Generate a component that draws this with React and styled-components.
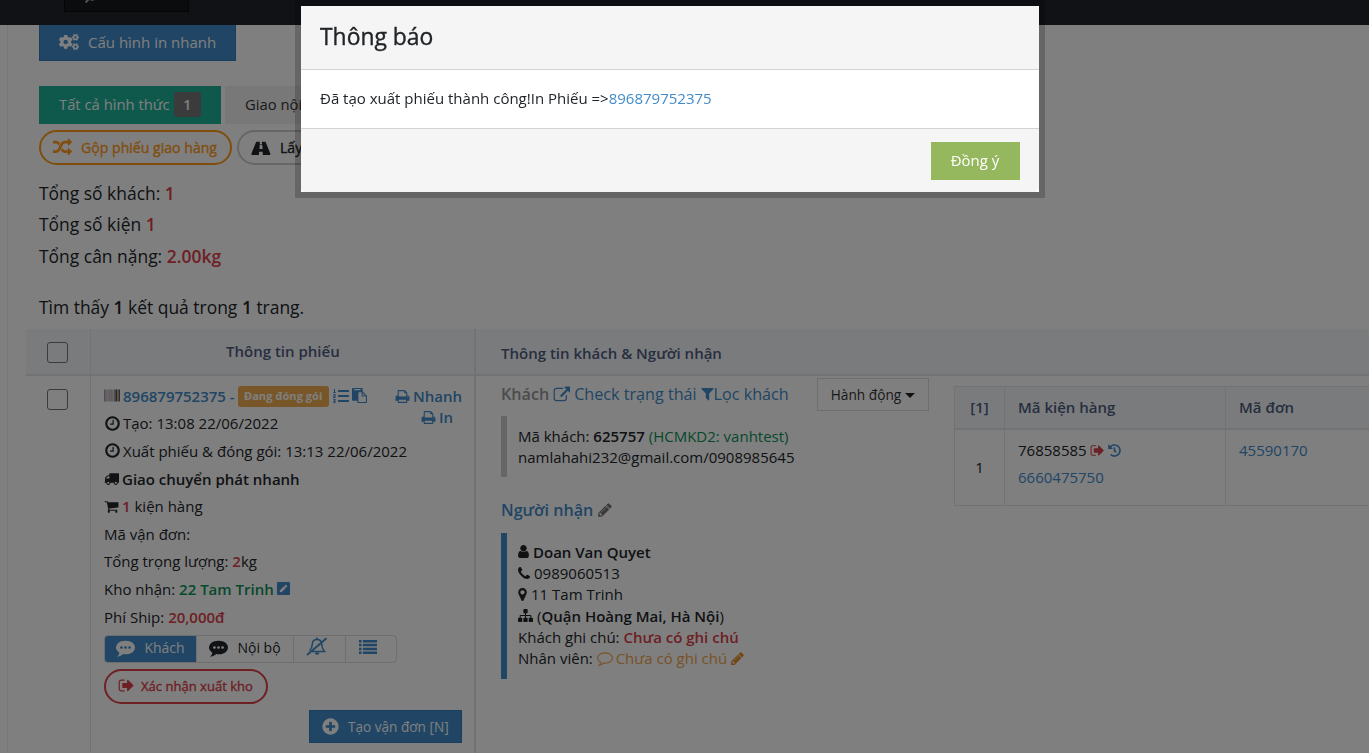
import React from 'react';
import styled, { createGlobalStyle, css } from 'styled-components';
import { FaCogs, FaListOl, FaPenSquare, FaHistory, FaSearch } from 'react-icons/fa';

const GlobalStyle = createGlobalStyle`
  *, *::before, *::after { box-sizing: border-box; }
  body {
    margin: 0;
    overflow: hidden;
    background: #fff;
    color: #212529;
    font-family: 'Open Sans', 'Noto Sans', sans-serif;
    font-size: 15px;
  }
  h2, p { margin: 0; font-weight: 400; }
  button { font-family: inherit; }
`;

const paths = {
  clock: 'M1024 544v448q0 14-9 23t-23 9h-320q-14 0-23-9t-9-23v-64q0-14 9-23t23-9h224v-352q0-14 9-23t23-9h64q14 0 23 9t9 23zm416 352q0-148-73-273t-198-198-273-73-273 73-198 198-73 273 73 273 198 198 273 73 273-73 198-198 73-273zm224 0q0 209-103 385.5t-279.5 279.5-385.5 103-385.5-103-279.5-279.5-103-385.5 103-385.5 279.5-279.5 385.5-103 385.5 103 279.5 279.5 103 385.5z',
  plus: 'M1344 960v-128q0-26-19-45t-45-19h-256v-256q0-26-19-45t-45-19h-128q-26 0-45 19t-19 45v256h-256q-26 0-45 19t-19 45v128q0 26 19 45t45 19h256v256q0 26 19 45t45 19h128q26 0 45-19t19-45v-256h256q26 0 45-19t19-45zm320-64q0 209-103 385.5t-279.5 279.5-385.5 103-385.5-103-279.5-279.5-103-385.5 103-385.5 279.5-279.5 385.5-103 385.5 103 279.5 279.5 103 385.5z',
  commenting: 'M640 896q0-53-37.5-90.5t-90.5-37.5-90.5 37.5-37.5 90.5 37.5 90.5 90.5 37.5 90.5-37.5 37.5-90.5zm384 0q0-53-37.5-90.5t-90.5-37.5-90.5 37.5-37.5 90.5 37.5 90.5 90.5 37.5 90.5-37.5 37.5-90.5zm384 0q0-53-37.5-90.5t-90.5-37.5-90.5 37.5-37.5 90.5 37.5 90.5 90.5 37.5 90.5-37.5 37.5-90.5zm384 0q0 174-120 321.5t-326 233-450 85.5q-110 0-211-18-173 173-435 229-52 10-86 13-12 1-22-6t-13-18q-4-15 20-37 5-5 23.5-21.5t25.5-23.5 23.5-25.5 24-31.5 20.5-37 20-48 14.5-57.5 12.5-72.5q-146-90-229.5-216.5t-83.5-269.5q0-174 120-321.5t326-233 450-85.5 450 85.5 326 233 120 321.5z',
  comment: 'M896 384q-204 0-381.5 69.5t-282 187.5-104.5 255q0 112 71.5 213.5t201.5 175.5l87 50-27 96q-24 91-70 172 152-63 275-171l43-38 57 6q69 8 130 8 204 0 381.5-69.5t282-187.5 104.5-255-104.5-255-282-187.5-381.5-69.5zm896 512q0 174-120 321.5t-326 233-450 85.5q-70 0-145-8-198 175-460 242-49 14-114 22h-5q-15 0-27-10.5t-16-27.5v-1q-3-4-.5-12t2-10 4.5-9.5l6-9 7-8.5 8-9q7-8 31-34.5t34.5-38 31-39.5 32.5-51 27-59 26-76q-157-89-247.5-220t-90.5-281q0-174 120-321.5t326-233 450-85.5 450 85.5 326 233 120 321.5z',
  print: 'M448 1536h896v-256h-896v256zm0-640h896v-384h-160q-40 0-68-28t-28-68v-160h-640v640zm1152 64q0-26-19-45t-45-19-45 19-19 45 19 45 45 19 45-19 19-45zm128 0v416q0 13-9.5 22.5t-22.5 9.5h-224v160q0 40-28 68t-68 28h-960q-40 0-68-28t-28-68v-160h-224q-13 0-22.5-9.5t-9.5-22.5v-416q0-79 56.5-135.5t135.5-56.5h64v-544q0-40 28-68t68-28h672q40 0 88 20t76 48l152 152q28 28 48 76t20 88v256h64q79 0 135.5 56.5t56.5 135.5z',
  signout: 'M704 1440q0 4 1 20t.5 26.5-3 23.5-10 19.5-20.5 6.5h-320q-119 0-203.5-84.5t-84.5-203.5v-704q0-119 84.5-203.5t203.5-84.5h320q13 0 22.5 9.5t9.5 22.5q0 4 1 20t.5 26.5-3 23.5-10 19.5-20.5 6.5h-320q-66 0-113 47t-47 113v704q0 66 47 113t113 47h312l11.5 1 11.5 3 8 5.5 7 9 2 13.5zm928-544q0 26-19 45l-544 544q-19 19-45 19t-45-19-19-45v-288h-448q-26 0-45-19t-19-45v-384q0-26 19-45t45-19h448v-288q0-26 19-45t45-19 45 19l544 544q19 19 19 45z',
  filter: 'M1595 295q17 41-14 70l-493 493v742q0 42-39 59-13 5-25 5-27 0-45-19l-256-256q-19-19-19-45v-486l-493-493q-31-29-14-70 17-39 59-39h1280q42 0 59 39z',
  external: 'M1472 992v320q0 119-84.5 203.5t-203.5 84.5h-832q-119 0-203.5-84.5t-84.5-203.5v-832q0-119 84.5-203.5t203.5-84.5h704q14 0 23 9t9 23v64q0 14-9 23t-23 9h-704q-66 0-113 47t-47 113v832q0 66 47 113t113 47h832q66 0 113-47t47-113v-320q0-14 9-23t23-9h64q14 0 23 9t9 23zm384-864v512q0 26-19 45t-45 19-45-19l-176-176-652 652q-10 10-23 10t-23-10l-114-114q-10-10-10-23t10-23l652-652-176-176q-19-19-19-45t19-45 45-19h512q26 0 45 19t19 45z',
  pencil: 'M491 1536l91-91-235-235-91 91v107h128v128h107zm523-928q0-22-22-22-10 0-17 7l-542 542q-7 7-7 17 0 22 22 22 10 0 17-7l542-542q7-7 7-17zm-54-192l416 416-832 832h-416v-416zm683 96q0 53-37 90l-166 166-416-416 166-165q36-38 90-38 53 0 91 38l235 234q37 39 37 91z',
  user: 'M1536 1399q0 109-62.5 187t-150.5 78h-854q-88 0-150.5-78t-62.5-187q0-85 8.5-160.5t31.5-152 58.5-131 94-89 134.5-34.5q131 128 313 128t313-128q76 0 134.5 34.5t94 89 58.5 131 31.5 152 8.5 160.5zm-256-887q0 159-112.5 271.5t-271.5 112.5-271.5-112.5-112.5-271.5 112.5-271.5 271.5-112.5 271.5 112.5 112.5 271.5z',
  phone: 'M1600 1240q0 27-10 70.5t-21 68.5q-21 50-122 106-94 51-186 51-27 0-53-3.5t-57.5-12.5-47-14.5-55.5-20.5-49-18q-98-35-175-83-127-79-264-216t-216-264q-48-77-83-175-3-9-18-49t-20.5-55.5-14.5-47-12.5-57.5-3.5-53q0-92 51-186 56-101 106-122 25-11 68.5-21t70.5-10q14 0 21 3 18 6 53 76 11 19 30 54t35 63.5 31 53.5q3 4 17.5 25t21.5 35.5 7 28.5q0 20-28.5 50t-62 55-62 53-28.5 46q0 9 5 22.5t8.5 20.5 14 24 11.5 19q76 137 174 235t235 174q2 1 19 11.5t24 14 20.5 8.5 22.5 5q18 0 46-28.5t53-62 55-62 50-28.5q14 0 28.5 7t35.5 21.5 25 17.5q25 15 53.5 31t63.5 35 54 30q70 35 76 53 3 7 3 21z',
  marker: 'M1152 640q0-106-75-181t-181-75-181 75-75 181 75 181 181 75 181-75 75-181zm256 0q0 109-33 179l-364 774q-16 33-47.5 52t-67.5 19-67.5-19-46.5-52l-365-774q-33-70-33-179 0-212 150-362t362-150 362 150 150 362z',
  sitemap: 'M1792 1248v320q0 40-28 68t-68 28h-320q-40 0-68-28t-28-68v-320q0-40 28-68t68-28h96v-192h-512v192h96q40 0 68 28t28 68v320q0 40-28 68t-68 28h-320q-40 0-68-28t-28-68v-320q0-40 28-68t68-28h96v-192h-512v192h96q40 0 68 28t28 68v320q0 40-28 68t-68 28h-320q-40 0-68-28t-28-68v-320q0-40 28-68t68-28h96v-192q0-52 38-90t90-38h512v-192h-96q-40 0-68-28t-28-68v-320q0-40 28-68t68-28h320q40 0 68 28t28 68v320q0 40-28 68t-68 28h-96v192h512q52 0 90 38t38 90v192h96q40 0 68 28t28 68z',
  cart: 'M704 1536q0 52-38 90t-90 38-90-38-38-90 38-90 90-38 90 38 38 90zm896 0q0 52-38 90t-90 38-90-38-38-90 38-90 90-38 90 38 38 90zm128-1088v512q0 24-16.5 42.5t-40.5 21.5l-1044 122q13 60 13 70 0 16-24 64h920q26 0 45 19t19 45-19 45-45 19h-1024q-26 0-45-19t-19-45q0-11 8-31.5t16-36 21.5-40 15.5-29.5l-177-823h-204q-26 0-45-19t-19-45 19-45 45-19h256q16 0 28.5 6.5t19.5 15.5 13 24.5 8 26 5.5 29.5 4.5 26h1201q26 0 45 19t19 45z',
  truck: 'M640 1408q0-52-38-90t-90-38-90 38-38 90 38 90 90 38 90-38 38-90zm-384-512h384v-256h-158q-13 0-22 9l-195 195q-9 9-9 22v30zm1280 512q0-52-38-90t-90-38-90 38-38 90 38 90 90 38 90-38 38-90zm256-1088v1024q0 15-4 26.5t-13.5 18.5-16.5 11.5-23.5 6-22.5 2-25.5 0-22.5-.5q0 106-75 181t-181 75-181-75-75-181h-384q0 106-75 181t-181 75-181-75-75-181h-64q-3 0-22.5.5t-25.5 0-22.5-2-23.5-6-16.5-11.5-13.5-18.5-4-26.5q0-26 19-45t45-19v-320q0-8-.5-35t0-38 2.5-34.5 6.5-37 14-30.5 22.5-30l198-198q19-19 50.5-32t58.5-13h160v-192q0-26 19-45t45-19h1024q26 0 45 19t19 45z',
  random: 'M666 481q-60 92-137 273-22-45-37-72.5t-40.5-63.5-51-56.5-63-35-81.5-14.5h-224q-14 0-23-9t-9-23v-192q0-14 9-23t23-9h224q250 0 410 225zm1126 799q0 14-9 23l-320 320q-9 9-23 9-13 0-22.5-9.5t-9.5-22.5v-192q-32 0-85 .5t-81 1-73-1-71-5-64-10.5-63-18.5-58-28.5-59-40-55-53.5-56-69.5q59-93 136-273 22 45 37 72.5t40.5 63.5 51 56.5 63 35 81.5 14.5h256v-192q0-14 9-23t23-9q12 0 24 10l319 319q9 9 9 23zm0-896q0 14-9 23l-320 320q-9 9-23 9-13 0-22.5-9.5t-9.5-22.5v-192h-256q-48 0-87 15t-69 45-51 61.5-45 77.5q-32 62-78 171-29 66-49.5 111t-54 105-64 100-74 83-90 68.5-106.5 42-128 16.5h-224q-14 0-23-9t-9-23v-192q0-14 9-23t23-9h224q48 0 87-15t69-45 51-61.5 45-77.5q32-62 78-171 29-66 49.5-111t54-105 64-100 74-83 90-68.5 106.5-42 128-16.5h256v-192q0-14 9-23t23-9q12 0 24 10l319 319q9 9 9 23z',
  road: 'M1111 1020v-4l-24-320q-1-13-11-22.5t-23-9.5h-186q-13 0-23 9.5t-11 22.5l-24 320v4q-1 12 8 20t21 8h244q12 0 21-8t8-20zm746 531q0 73-46 73h-704q13 0 22-9.5t8-22.5l-20-256q-1-13-11-22.5t-23-9.5h-272q-13 0-23 9.5t-11 22.5l-20 256q-1 13 8 22.5t22 9.5h-704q-46 0-46-73 0-54 26-116l417-1044q8-19 26-33t38-14h339q-13 0-23 9.5t-11 22.5l-15 192q-1 14 8 23t22 9h166q13 0 22-9t8-23l-15-192q-1-13-11-22.5t-23-9.5h339q20 0 38 14t26 33l417 1044q26 62 26 116z',
  list: 'M0 192h256v256h-256zM384 192h1408v256h-1408zM0 576h256v256h-256zM384 576h1408v256h-1408zM0 960h256v256h-256zM384 960h1408v256h-1408zM0 1344h256v256h-256zM384 1344h1408v256h-1408z',
  paste: 'M768 1664h896v-640h-416q-40 0-68-28t-28-68v-416h-384v1152zm256-1440v-64q0-13-9.500-22.500t-22.500-9.500h-704q-13 0-22.500 9.500t-9.500 22.500v64q0 13 9.500 22.500t22.500 9.500h704q13 0 22.500-9.500t9.500-22.500zm256 672h299l-299-299v299zm512 128v672q0 40-28 68t-68 28h-960q-40 0-68-28t-28-68v-160h-544q-40 0-68-28t-28-68v-1344q0-40 28-68t68-28h1088q40 0 68 28t28 68v328q21 13 36 28l408 408q28 28 48 76t20 88z',
};

const Glyph = styled.svg`
  flex: none;
  display: block;
  fill: currentColor;
`;

function Icon({ name, size = 16, box = '0 0 1792 1792', w }) {
  return (
    <Glyph width={w || size} height={size} viewBox={box}>
      <path d={paths[name]} />
    </Glyph>
  );
}

function BellSlash() {
  return (
    <Glyph width="22" height="19" viewBox="0 0 22 19">
      <g fill="none" stroke="currentColor" strokeWidth="1.5">
        <path d="M3.5 13.8C6 11.5 6.2 9.5 6.3 7.2C6.4 4 8.3 2.500 11 2.500C13.800 2.500 15.600 4 15.700 7.200C15.800 9.800 16.200 11.800 18.500 14.500H6" />
        <path d="M1 18L20.5 1.2" strokeWidth="1.8" />
      </g>
      <path d="M8.8 15.5h4.600a2.300 2.300 0 0 1-4.600 0zM10.200.600h1.600v2h-1.600z" />
    </Glyph>
  );
}

function Barcode() {
  const bars = ['#9a96ae', '#c6b4c0', '#e0c4b8', '#a8b4cc', '#d0bcc4', '#b4a4a0', '#d8d0bc', '#8c8894', '#4c4a54', '#b8b080', '#5a5660'];
  return (
    <Glyph width="16" height="13" viewBox="0 0 16 13">
      {bars.map((c, i) => <rect key={i} x={i * 1.45} y="0.5" width="1.45" height="12" fill={c} />)}
    </Glyph>
  );
}

const Page = styled.div`
  height: 753px;
  width: 1369px;
  overflow: hidden;
`;
const TopBar = styled.header`
  height: 25px;
  background: #22252c;
  padding-left: 64px;
`;
const SearchBox = styled.div`
  width: 125px;
  height: 12px;
  overflow: hidden;
  background: #16181b;
  border: 1px solid #0c0d0e;
  border-top: 0;
  color: #aaa;
  padding-left: 20px;
  display: flex;
  align-items: flex-end;
  svg { transform: scaleX(-1); margin-bottom: 8px; flex: none; }
`;
const Main = styled.main`
  margin-left: 7px;
  height: 728px;
  border-left: 1px solid #f0f0f0;
  padding-left: 18px;
  display: flex;
  flex-direction: column;
`;
const Intro = styled.section`
  height: 304px;
  flex: none;
  padding-left: 13px;
  display: flex;
  flex-direction: column;
  align-items: flex-start;
`;
const QuickButton = styled.button`
  display: flex;
  align-items: center;
  gap: 9px;
  width: 197px;
  height: 36px;
  padding: 0 0 2px 19px;
  border: 1px solid #357ebd;
  border-top: 0;
  background: #428bca;
  color: #fff;
  font-size: 15px;
`;
const Tabs = styled.div`
  display: flex;
  gap: 4px;
  margin-top: 25px;
`;
const Tab = styled.div`
  display: flex;
  align-items: center;
  gap: 4px;
  width: ${(p) => p.$w}px;
  height: 38px;
  padding: 0 0 2px 20px;
  white-space: nowrap;
  font-size: 14.8px;
  background: ${(p) => (p.$active ? '#1fb198' : '#f0f0f0')};
  color: ${(p) => (p.$active ? '#fff' : '#333')};
`;
const Count = styled.span`
  width: 27px;
  height: 25px;
  line-height: 25px;
  border-radius: 3px;
  text-align: center;
  font-weight: 600;
  font-size: 14px;
  background: #777;
`;
const Pills = styled.div`
  display: flex;
  gap: 5px;
  margin-top: 6px;
`;
const Pill = styled.button`
  display: flex;
  align-items: center;
  flex: none;
  gap: ${(p) => p.$gap || 9}px;
  width: ${(p) => p.$w}px;
  height: 35px;
  margin-top: ${(p) => p.$top || 0}px;
  padding: 0 0 ${(p) => p.$lift || 0}px 12px;
  border: 2px solid ${(p) => p.$line || p.$color};
  border-radius: 18px;
  background: transparent;
  color: ${(p) => p.$color};
  font-size: ${(p) => p.$size || 14.1}px;
  -webkit-text-stroke: 0.35px currentColor;
  white-space: nowrap;
`;
const Summary = styled.div`
  margin-top: 13px;
  font-size: 17.45px;
  line-height: 31.4px;
  p:last-child { margin-top: 20px; }
`;
const Red = styled.b`
  color: #dc4048;
  font-weight: 600;
`;
const Strong = styled.b`
  font-weight: 600;
`;
const Green = styled.span`
  color: #0c9258;
  font-weight: ${(p) => (p.$bold ? 600 : 400)};
`;
const Link = styled.a`
  display: inline-flex;
  align-items: center;
  gap: ${(p) => p.$gap || 3}px;
  color: #428bca;
  font-weight: ${(p) => (p.$bold ? 600 : 400)};
`;

const cols = css`
  display: grid;
  grid-template-columns: 65px 385px 1fr;
`;
const HeadRow = styled.div`
  ${cols};
  height: 47px;
  flex: none;
  background: #f5f7fa;
  border-bottom: 2px solid #e3e5e8;
  color: #4e5d80;
  font-weight: 600;
  font-size: 15px;
`;
const BodyRow = styled.div`
  ${cols};
  flex: 1;
`;
const Cell = styled.div`
  border-right: ${(p) => p.$line || 0}px solid #e3e5e8;
  padding: ${(p) => p.$pad || 0};
`;
const Box = styled.div`
  width: 21px;
  height: 21px;
  border: 1px solid #767676;
  border-radius: 3px;
`;
const SlipCell = styled(Cell)`
  display: flex;
  flex-direction: column;
  align-items: flex-start;
  padding: 6px 12px 0 13px;
`;
const Line = styled.div`
  display: flex;
  align-items: center;
  gap: ${(p) => (p.$gap === undefined ? 3 : p.$gap)}px;
  height: ${(p) => p.$h || 27.6}px;
  width: 100%;
  white-space: pre;
  font-size: 15px;
`;
const Status = styled.span`
  width: 91px;
  height: 21px;
  line-height: 20px;
  margin: 2px 1px 0 0;
  border-radius: 3px;
  background: #f0ad4e;
  color: #fff;
  text-align: center;
  font-size: 11.1px;
  font-weight: 700;
`;
const PrintLinks = styled.div`
  align-self: flex-start;
  display: flex;
  flex-direction: column;
  align-items: flex-end;
  margin: 4px 0 0 auto;
  height: 21px;
  line-height: 21px;
  font-size: 15px;
  a:last-child { margin-right: 9px; }
`;
const Group = styled.div`
  display: flex;
  flex: none;
  width: 293px;
  height: 28px;
  margin-top: 4.6px;
  border: 1px solid #dcdcdc;
  border-radius: 4px;
  overflow: hidden;
`;
const GroupButton = styled.button`
  display: flex;
  align-items: center;
  justify-content: center;
  gap: 9px;
  width: ${(p) => p.$w}px;
  padding: 0 ${(p) => p.$right || 0}px ${(p) => p.$lift || 2}px 0;
  border: 0;
  border-right: ${(p) => (p.$last ? 0 : 1)}px solid #dcdcdc;
  background: ${(p) => (p.$fill ? '#428bca' : 'transparent')};
  color: ${(p) => p.$color};
  font-size: 14px;
`;
const CreateButton = styled.button`
  display: flex;
  align-items: center;
  align-self: flex-end;
  flex: none;
  gap: 8px;
  width: 153px;
  height: 33px;
  margin: 6px 0 0 0;
  padding: 0 0 0 11px;
  border: 1px solid #357ebd;
  background: #428bca;
  color: #fff;
  font-size: 13.6px;
  white-space: nowrap;
`;
const Detail = styled.div`
  display: flex;
  align-items: flex-start;
  padding-left: 25px;
`;
const Contact = styled.div`
  width: 316px;
  padding-top: 7px;
`;
const ContactTitle = styled.div`
  display: flex;
  align-items: center;
  gap: 4px;
  height: 22px;
  margin-top: ${(p) => p.$top || 0}px;
  font-size: 16.15px;
  color: #428bca;
  font-weight: ${(p) => (p.$bold ? 600 : 400)};
  white-space: nowrap;
`;
const Filter = styled.span`
  display: inline-flex;
  align-items: center;
`;
const Muted = styled.span`
  color: #999;
  font-weight: 600;
`;
const Quote = styled.div`
  margin-top: ${(p) => p.$top}px;
  height: ${(p) => p.$h}px;
  padding: ${(p) => p.$pad || 8}px 0 0 11px;
  border-left: 6px solid ${(p) => p.$color};
`;
const ActionButton = styled.button`
  display: flex;
  align-items: center;
  justify-content: center;
  gap: 4px;
  width: 112px;
  height: 33px;
  margin-top: 2px;
  padding: 0;
  border: 1px solid #dcdcdc;
  background: #fff;
  color: #333;
  font-size: 13.7px;
`;
const Caret = styled.span`
  border: 5px solid transparent;
  border-top-color: #222;
  border-bottom: 0;
  margin-top: 2px;
`;
const Packages = styled.div`
  flex: 1;
  margin: 10px 0 0 25px;
  display: grid;
  grid-template-columns: 50px 221px 1fr;
  grid-template-rows: 43px 75px;
  border: 1px solid #e3e5e8;
  border-right: 0;
`;
const PackHead = styled.div`
  display: flex;
  align-items: center;
  justify-content: ${(p) => (p.$center ? 'center' : 'flex-start')};
  padding: 0 0 2px ${(p) => (p.$center ? 0 : 13)}px;
  background: #f5f7fa;
  color: #4e5d80;
  font-weight: 600;
  border-bottom: 2px solid #e3e5e8;
  border-right: ${(p) => (p.$last ? 0 : 1)}px solid #e3e5e8;
`;
const PackCell = styled.div`
  padding: ${(p) => (p.$center ? '24px 0 0' : '7px 0 0 13px')};
  text-align: ${(p) => (p.$center ? 'center' : 'left')};
  border-right: ${(p) => (p.$last ? 0 : 1)}px solid #e3e5e8;
  line-height: 27px;
`;
const Tint = styled.span`
  display: inline-flex;
  color: ${(p) => p.$c};
  margin: ${(p) => p.$m || 0};
`;

const Overlay = styled.div`
  position: fixed;
  inset: 0;
  background: rgba(0, 0, 0, 0.5);
`;
const Modal = styled.div`
  position: absolute;
  top: 6px;
  left: 301px;
  width: 738px;
  height: 186px;
  background: #fff;
  box-shadow: 0 0 0 6px rgba(0, 0, 0, 0.2);
  display: flex;
  flex-direction: column;
`;
const ModalHead = styled.h2`
  height: 64px;
  padding-left: 19px;
  background: #f5f5f5;
  border-bottom: 1px solid #d3d3d3;
  border-radius: 0 5px 0 0;
  font-size: 22.9px;
  -webkit-text-stroke: 0.35px currentColor;
  line-height: 61px;
`;
const ModalBody = styled.p`
  height: 59px;
  padding-left: 19px;
  line-height: 57px;
  border-bottom: 1px solid #d3d3d3;
  font-size: 15px;
`;
const SlipLink = styled.a`
  color: #428bca;
`;
const ModalFoot = styled.div`
  flex: 1;
  display: flex;
  justify-content: flex-end;
  padding: 13px 19px 0 0;
  background: #f5f5f5;
  border-radius: 0 0 5px 5px;
`;
const Confirm = styled.button`
  width: 89px;
  height: 38px;
  padding: 0 1px 2px 0;
  border: 0;
  background: #95b75d;
  color: #fff;
  font-size: 15px;
`;

export default function App() {
  return (
    <>
      <GlobalStyle />
      <Page>
        <TopBar><SearchBox><FaSearch size={12} /></SearchBox></TopBar>
        <Main>
          <Intro>
            <QuickButton><FaCogs size={20} />Cấu hình in nhanh</QuickButton>
            <Tabs>
              <Tab $w={182} $active>Tất cả hình thức <Count>1</Count></Tab>
              <Tab $w={130}>Giao nội bộ</Tab>
            </Tabs>
            <Pills>
              <Pill $w={193} $lift={1} $color="#ff9d1b"><Icon name="random" size={19} />Gộp phiếu giao hàng</Pill>
              <Pill $w={160} $lift={1} $color="#212529" $line="#ccc"><Icon name="road" size={19} w={20} box="0 0 1920 1792" />Lấy hàng</Pill>
            </Pills>
            <Summary>
              <p>Tổng số khách: <Red>1</Red></p>
              <p>Tổng số kiện <Red>1</Red></p>
              <p>Tổng cân nặng: <Red>2.00kg</Red></p>
              <p>Tìm thấy <Strong>1</Strong> kết quả trong <Strong>1</Strong> trang.</p>
            </Summary>
          </Intro>
          <HeadRow>
            <Cell $line={1} $pad="13px 0 0 21px"><Box /></Cell>
            <Cell $line={2} $pad="12px 0 0 135px">Thông tin phiếu</Cell>
            <Cell $pad="14px 0 0 25px">Thông tin khách &amp; Người nhận</Cell>
          </HeadRow>
          <BodyRow>
            <Cell $line={1} $pad="13px 0 0 21px"><Box /></Cell>
            <SlipCell $line={2}>
              <Line>
                <Barcode /><Link $bold>896879752375 -</Link>
                <Status>Đang đóng gói</Status>
                <Tint $c="#428bca"><FaListOl size={16} /></Tint>
                <Tint $c="#428bca"><Icon name="paste" size={15} /></Tint>
                <PrintLinks>
                  <Link $bold><Icon name="print" size={15} />Nhanh</Link>
                  <Link $bold><Icon name="print" size={15} />In</Link>
                </PrintLinks>
              </Line>
              <Line $gap={2}><Icon name="clock" size={17} />Tạo: 13:08 22/06/2022</Line>
              <Line $gap={2}><Icon name="clock" size={17} />Xuất phiếu &amp; đóng gói: 13:13 22/06/2022</Line>
              <Line><Icon name="truck" size={15} /><Strong>Giao chuyển phát nhanh</Strong></Line>
              <Line><Icon name="cart" size={15} /><span><Red>1</Red> kiện hàng</span></Line>
              <Line>Mã vận đơn:</Line>
              <Line $gap={0}>Tổng trọng lượng: <Red>2</Red>kg</Line>
              <Line $gap={0}>Kho nhận: <Green $bold>22 Tam Trinh</Green><Tint $c="#428bca" $m="0 0 0 2px"><FaPenSquare size={15} /></Tint></Line>
              <Line $gap={0}>Phí Ship: <Red>20,000đ</Red></Line>
              <Group>
                <GroupButton $w={92} $fill $color="#fff"><Icon name="commenting" size={19} />Khách</GroupButton>
                <GroupButton $w={97} $color="#212529"><Icon name="commenting" size={19} />Nội bộ</GroupButton>
                <GroupButton $w={52} $right={5} $lift={4} $color="#428bca"><BellSlash /></GroupButton>
                <GroupButton $w={50} $right={6} $lift={4} $last $color="#428bca"><Icon name="list" size={18} /></GroupButton>
              </Group>
              <Pill $w={164} $size={13.05} $gap={6} $top={6} $lift={1} $color="#dc4048"><Icon name="signout" size={17} />Xác nhận xuất kho</Pill>
              <CreateButton><Icon name="plus" size={19} />Tạo vận đơn [N]</CreateButton>
            </SlipCell>
            <Detail>
              <Contact>
                <ContactTitle>
                  <Muted>Khách</Muted><Icon name="external" size={17} />Check trạng thái
                  <Filter><Icon name="filter" size={14} w={13} box="192 128 1408 1600" />Lọc khách</Filter>
                </ContactTitle>
                <Quote $color="#ccc" $h={61} $top={11} $pad={9}>
                  <Line $h={21.3} $gap={0}>Mã khách: <Strong>625757 </Strong><Green>(HCMKD2: vanhtest)</Green></Line>
                  <Line $h={21.3}>namlahahi232@gmail.com/0908985645</Line>
                </Quote>
                <ContactTitle $bold $top={22}>Người nhận<Tint $c="#777"><Icon name="pencil" /></Tint></ContactTitle>
                <Quote $color="#428bca" $h={146} $top={12}>
                  <Line $h={21.3} $gap={4}><Icon name="user" size={13} w={11} box="256 128 1280 1536" /><Strong>Doan Van Quyet</Strong></Line>
                  <Line $h={21.3} $gap={4}><Icon name="phone" size={12} box="192 128 1408 1408" />0989060513</Line>
                  <Line $h={21.3} $gap={4}><Icon name="marker" size={13} w={9} box="384 128 1024 1536" />11 Tam Trinh</Line>
                  <Line $h={21.3} $gap={4}><Icon name="sitemap" size={15} /><span>(<Strong>Quận Hoàng Mai, Hà Nội</Strong>)</span></Line>
                  <Line $h={21.3} $gap={0}>Khách ghi chú: <Red>Chưa có ghi chú</Red></Line>
                  <Line $h={21.3} $gap={0}>Nhân viên: <Tint $c="#f0a54e"><Icon name="comment" /></Tint><Tint $c="#f0a54e" $m="0 3px">Chưa có ghi chú</Tint><Tint $c="#e0902f"><Icon name="pencil" size={15} /></Tint></Line>
                </Quote>
              </Contact>
              <ActionButton>Hành động<Caret /></ActionButton>
              <Packages>
                <PackHead $center>[1]</PackHead>
                <PackHead>Mã kiện hàng</PackHead>
                <PackHead $last>Mã đơn</PackHead>
                <PackCell $center>1</PackCell>
                <PackCell>
                  <Line $h={27} $gap={3}>76858585<Tint $c="#d9434e"><Icon name="signout" size={15} /></Tint><Tint $c="#428bca"><FaHistory size={13} /></Tint></Line>
                  <Link>6660475750</Link>
                </PackCell>
                <PackCell $last><Link>45590170</Link></PackCell>
              </Packages>
            </Detail>
          </BodyRow>
        </Main>
      </Page>
      <Overlay>
        <Modal>
          <ModalHead>Thông báo</ModalHead>
          <ModalBody>Đã tạo xuất phiếu thành công!In Phiếu =&gt;<SlipLink>896879752375</SlipLink></ModalBody>
          <ModalFoot><Confirm>Đồng ý</Confirm></ModalFoot>
        </Modal>
      </Overlay>
    </>
  );
}
